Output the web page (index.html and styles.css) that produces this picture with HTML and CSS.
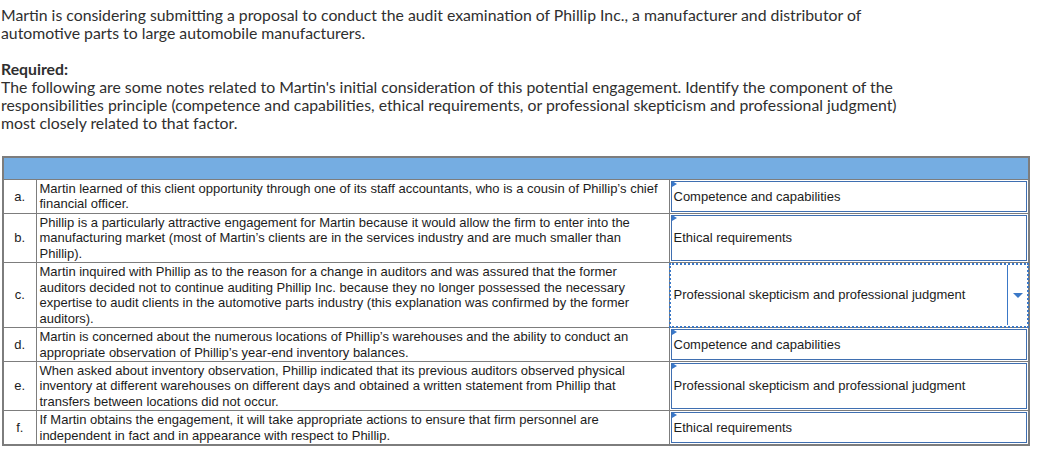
FILE: index.html
```html
<!DOCTYPE html>
<html>
<head>
<meta charset="utf-8">
<link rel="stylesheet" href="styles.css">
</head>
<body>
<div class="intro">
  <p class="para">Martin is considering submitting a proposal to conduct the audit examination of Phillip Inc., a manufacturer and distributor of automotive parts to large automobile manufacturers.</p>
  <p class="para"><strong>Required:</strong><br>The following are some notes related to Martin's initial consideration of this potential engagement. Identify the component of the responsibilities principle (competence and capabilities, ethical requirements, or professional skepticism and professional judgment) most closely related to that factor.</p>
</div>
<table class="grid">
  <colgroup><col class="c1"><col class="c2"><col class="c3"></colgroup>
  <tr class="head"><td colspan="3"></td></tr>
  <tr>
    <td class="lt">a.</td>
    <td class="tx">Martin learned of this client opportunity through one of its staff accountants, who is a cousin of Phillip’s chief financial officer.</td>
    <td class="sel">Competence and capabilities</td>
  </tr>
  <tr>
    <td class="lt">b.</td>
    <td class="tx">Phillip is a particularly attractive engagement for Martin because it would allow the firm to enter into the manufacturing market (most of Martin’s clients are in the services industry and are much smaller than Phillip).</td>
    <td class="sel">Ethical requirements</td>
  </tr>
  <tr>
    <td class="lt">c.</td>
    <td class="tx">Martin inquired with Phillip as to the reason for a change in auditors and was assured that the former auditors decided not to continue auditing Phillip Inc. because they no longer possessed the necessary expertise to audit clients in the automotive parts industry (this explanation was confirmed by the former auditors).</td>
    <td class="sel focus">Professional skepticism and professional judgment<span class="caret"></span></td>
  </tr>
  <tr>
    <td class="lt">d.</td>
    <td class="tx">Martin is concerned about the numerous locations of Phillip’s warehouses and the ability to conduct an appropriate observation of Phillip’s year-end inventory balances.</td>
    <td class="sel">Competence and capabilities</td>
  </tr>
  <tr>
    <td class="lt">e.</td>
    <td class="tx">When asked about inventory observation, Phillip indicated that its previous auditors observed physical inventory at different warehouses on different days and obtained a written statement from Phillip that transfers between locations did not occur.</td>
    <td class="sel">Professional skepticism and professional judgment</td>
  </tr>
  <tr>
    <td class="lt">f.</td>
    <td class="tx">If Martin obtains the engagement, it will take appropriate actions to ensure that firm personnel are independent in fact and in appearance with respect to Phillip.</td>
    <td class="sel">Ethical requirements</td>
  </tr>
</table>
</body>
</html>
```
FILE: styles.css
```css
html, body {
  margin: 0;
  padding: 0;
  background: #fff;
}
.intro {
  padding: 6px 0 0 1px;
  font-family: Lato, "Open Sans", sans-serif;
  font-size: 15.8px;
  line-height: 18px;
  color: #2f2f2f;
  width: 925px;
}
.para {
  margin: 0 0 18px 0;
}
.para:last-child {
  margin-bottom: 0;
}
.para strong {
  font-weight: 700;
}
.grid {
  margin: 24px 0 0 2px;
  width: 1026px;
  border-collapse: collapse;
  table-layout: fixed;
  font-family: "Liberation Sans", Arial, sans-serif;
  font-size: 13px;
  line-height: 15.45px;
  color: #1c1c1c;
  border: 2px solid #7d7d7d;
}
.c1 { width: 33px; }
.c2 { width: 633px; }
.c3 { width: 360px; }
.grid td {
  border: 1px solid #7d7d7d;
  padding: 1px 6px 1px 3px;
  vertical-align: top;
}
.head td {
  background: #75ade2;
  height: 21px;
  padding: 0;
}
.grid td.lt {
  text-align: center;
  vertical-align: middle;
  padding: 0;
}
.grid td.sel {
  position: relative;
  vertical-align: middle;
  padding: 0 4px 0 4px;
  box-shadow: inset 0 0 0 1px #fff, inset 0 0 0 2px #3f6fb1;
}
.grid td.sel::before {
  content: "";
  position: absolute;
  left: 2px;
  top: 1px;
  border-top: 3px solid transparent;
  border-bottom: 3px solid transparent;
  border-left: 5px solid #3a78c9;
}
.grid td.focus {
  box-shadow: none;
  outline: 2px dotted #3a78c7;
  outline-offset: -2px;
}
.grid td.focus::before {
  display: none;
}
.caret {
  position: absolute;
  top: 2px;
  bottom: 2px;
  right: 2px;
  width: 18px;
  border-left: 1px solid #3a78c7;
}
.caret::after {
  content: "";
  position: absolute;
  left: 5px;
  top: 50%;
  margin-top: -2px;
  border-left: 5px solid transparent;
  border-right: 5px solid transparent;
  border-top: 5px solid #3a78c7;
}
```
